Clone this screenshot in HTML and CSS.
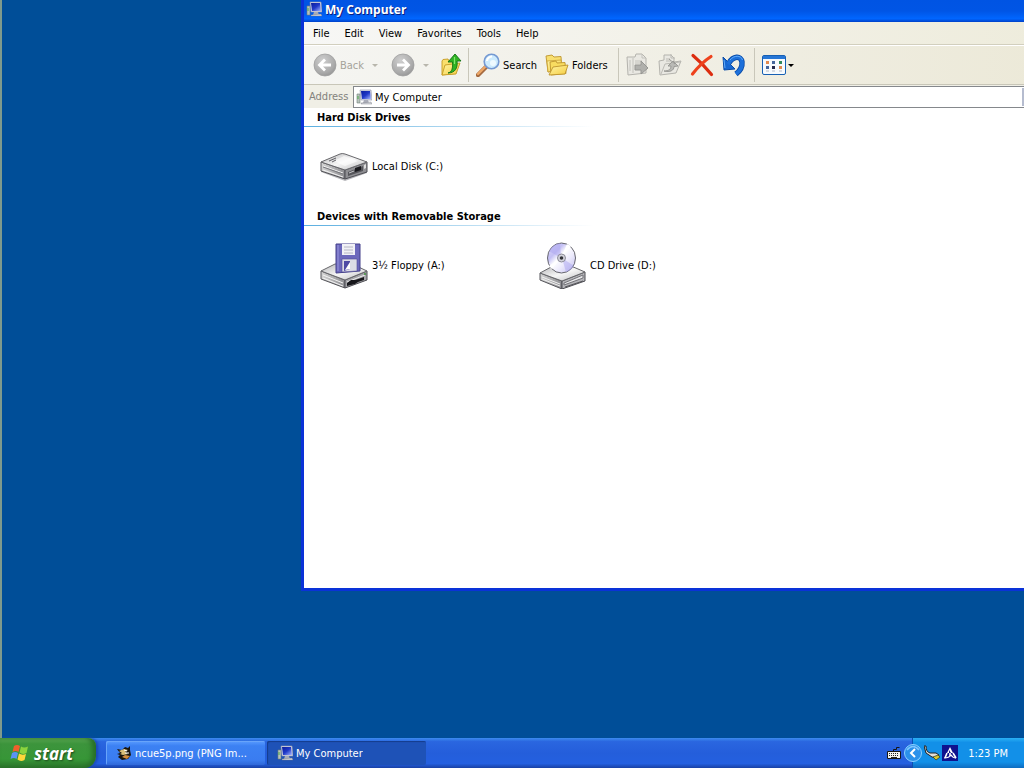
FILE: index.html
```html
<!DOCTYPE html>
<html lang="en">
<head>
  <meta charset="UTF-8">
  <meta name="viewport" content="width=device-width, initial-scale=1.0">
  <title>My Computer</title>
  <link rel="stylesheet" href="styles.css">
</head>
<body>
  <!-- shared icons and gradients -->
  <svg class="defs" width="0" height="0" aria-hidden="true">
    <defs>
      <linearGradient id="screen" x1="0" y1="0" x2="1" y2="1">
        <stop offset="0" stop-color="#0a1c9c"/><stop offset="0.5" stop-color="#2038c8"/><stop offset="1" stop-color="#a8b8ff"/>
      </linearGradient>
      <radialGradient id="gray" cx="0.4" cy="0.3" r="0.8">
        <stop offset="0" stop-color="#cfcfcf"/><stop offset="0.7" stop-color="#a9a9a9"/><stop offset="1" stop-color="#8e8e8e"/>
      </radialGradient>
      <linearGradient id="top" x1="0" y1="0" x2="1" y2="1">
        <stop offset="0" stop-color="#b4b4b6"/><stop offset="0.5" stop-color="#f6f6f6"/><stop offset="1" stop-color="#bcbcbe"/>
      </linearGradient>
      <linearGradient id="side" x1="0" y1="0" x2="1" y2="0">
        <stop offset="0" stop-color="#d4d4d4"/><stop offset="1" stop-color="#8c8c90"/>
      </linearGradient>
      <linearGradient id="folder" x1="0" y1="0" x2="1" y2="1">
        <stop offset="0" stop-color="#fff6a8"/><stop offset="1" stop-color="#f5cc3e"/>
      </linearGradient>
      <linearGradient id="disc" x1="0" y1="0" x2="1" y2="1">
        <stop offset="0" stop-color="#d8d4fa"/><stop offset="0.3" stop-color="#c4c0f4"/><stop offset="0.45" stop-color="#ffffff"/><stop offset="0.65" stop-color="#eceafc"/><stop offset="1" stop-color="#bcb8ee"/>
      </linearGradient>
      <symbol id="computer" viewBox="0 0 16 16">
        <path d="M1 5h3v9H1z" fill="#b9c4bd" stroke="#6f8078" stroke-width="0.6"/>
        <path d="M2 7v3" stroke="#4caa4c"/>
        <path d="M4 1l11 0 1 10-11 0z" fill="#d9dbe8" stroke="#8b90a8" stroke-width="0.6"/>
        <path d="M5 2h9l1 8H6z" fill="url(#screen)"/>
        <path d="M8 11h4l1 3H7z" fill="#a9acb8"/>
        <path d="M5 14l10-1 1 2H5z" fill="#d5d6dc" stroke="#70747f" stroke-width="0.4"/>
      </symbol>
    </defs>
  </svg>

  <main class="desktop">
    <section class="window">
      <header class="title-bar">
        <svg class="icon-16"><use href="#computer"/></svg>
        <h1>My Computer</h1>
      </header>

      <nav class="menu-bar">
        <button>File</button>
        <button>Edit</button>
        <button>View</button>
        <button>Favorites</button>
        <button>Tools</button>
        <button>Help</button>
      </nav>

      <div class="toolbar">
        <button class="tool" disabled>
          <svg class="icon-24" viewBox="0 0 24 24">
            <circle cx="12" cy="12" r="11" fill="url(#gray)" stroke="#a0a0a0" stroke-width="0.8"/>
            <path d="M18 12H7M12 6.500l-5.500 5.500 5.500 5.500" fill="none" stroke="#fff" stroke-width="2.800"/>
          </svg>
          Back
        </button>
        <button class="arrow" disabled aria-label="Back history"></button>
        <button class="tool" disabled aria-label="Forward">
          <svg class="icon-24" viewBox="0 0 24 24">
            <circle cx="12" cy="12" r="11" fill="url(#gray)" stroke="#a0a0a0" stroke-width="0.8"/>
            <path d="M6 12h11M12 6.500l5.500 5.500-5.500 5.500" fill="none" stroke="#fff" stroke-width="2.800"/>
          </svg>
        </button>
        <button class="arrow last" disabled aria-label="Forward history"></button>
        <button class="tool up" aria-label="Up">
          <svg class="icon-24" viewBox="0 0 24 24">
            <path d="M3 8l1-1.500 5-.5 1 2 6-.5v13L3 22z" fill="#f9df6c" stroke="#c59a20" stroke-width="0.9"/>
            <path d="M3 22l3-10 15-2-4 11z" fill="url(#folder)" stroke="#c59a20" stroke-width="0.9"/>
            <path d="M9 20c4-1 5-5 4.500-11H9l7-8 6 7h-4c1 7-2 12-9 12z" fill="#2fb324" stroke="#117012" stroke-width="0.9"/>
            <path d="M15.500 4v7" stroke="#83e66c" stroke-width="1.200"/>
          </svg>
        </button>
        <span class="separator"></span>
        <button class="tool">
          <svg class="icon-24" viewBox="0 0 24 24">
            <path d="M2 22l8-8" stroke="#a46a40" stroke-width="4.400" stroke-linecap="round"/>
            <path d="M2 21l8-8" stroke="#eea868" stroke-width="2.400" stroke-linecap="round"/>
            <circle cx="15.500" cy="8.500" r="7.300" fill="#cdebfd" stroke="#7599d2" stroke-width="1.600"/>
            <path d="M11 8a5 5 0 0 1 5-4.500" fill="none" stroke="#fff" stroke-width="2.200"/>
            <circle cx="17" cy="10" r="3" fill="#eefaff"/>
          </svg>
          Search
        </button>
        <button class="tool folders">
          <svg class="icon-24" viewBox="0 0 24 24">
            <path d="M1 3l6-1 2 2 7-.5 1 13L3 19z" fill="#f8df70" stroke="#bd942c" stroke-width="0.9"/>
            <path d="M3 19L2 8l14-1 1 8z" fill="url(#folder)" stroke="#c89f34" stroke-width="0.8"/>
            <path d="M5 9l6-1 1 2 8-.5 1 11L6 22z" fill="#f8dc60" stroke="#bd942c" stroke-width="0.9"/>
            <path d="M4 22l4-8 15-2-3 9z" fill="url(#folder)" stroke="#bd942c" stroke-width="0.9"/>
          </svg>
          Folders
        </button>
        <span class="separator"></span>
        <button class="tool" disabled aria-label="Move to">
          <svg class="icon-24" viewBox="0 0 24 24">
            <path d="M1 4h8l1-3h6l4 4v15L2 22z" fill="#e9e8e2" stroke="#b4b3ad"/>
            <path d="M16 1v4h4M4 7v11M7 5v15M9 8h7M9 10h5" fill="none" stroke="#c3c2bc"/>
            <path d="M9 12h6V8l7 7-7 6v-4H9z" fill="#b0b0ac" stroke="#969692"/>
          </svg>
        </button>
        <button class="tool" disabled aria-label="Copy to">
          <svg class="icon-24" viewBox="0 0 24 24">
            <path d="M1 8l5-1V2h7l3 3v4l7-1-5 12-16 2z" fill="#e9e8e2" stroke="#b4b3ad"/>
            <path d="M13 1v4h4M3 21l4-10 15-2M8 6h4M8 8h5" fill="none" stroke="#bcbbb5"/>
            <path d="M6 18c5 0 7-2 7-5h-3l5-5 5 5-4 .5c0 4-4 6-10 4.500zM11 6l6 5" fill="#babab6" stroke="#9a9a96"/>
          </svg>
        </button>
        <button class="tool" aria-label="Delete">
          <svg class="icon-24" viewBox="0 0 24 24">
            <path d="M3 2.500c6 5 12 11 18.500 19" fill="none" stroke="#dc2d10" stroke-width="3.200" stroke-linecap="round"/>
            <path d="M21 3.500C14 8 8 14 2.500 21" fill="none" stroke="#ee421c" stroke-width="3.200" stroke-linecap="round"/>
          </svg>
        </button>
        <button class="tool" aria-label="Undo">
          <svg class="icon-24" viewBox="0 0 24 24">
            <path d="M7 10C11 3 19 2 20 9c.5 5-2 9-6 12" fill="none" stroke="#0a4ba6" stroke-width="5.400"/>
            <path d="M1 4l1 13 11-1z" fill="#1768d2" stroke="#0a4ba6"/>
            <path d="M6 11C11 3 19 2 20 9c.5 5-2 9-6 12" fill="none" stroke="#1d70da" stroke-width="3.800"/>
            <path d="M8 7c4-5 11-5 12.500 0M2 7l1 8" fill="none" stroke="#62aefc"/>
          </svg>
        </button>
        <span class="separator"></span>
        <button class="tool views" aria-label="Views">
          <svg class="icon-24" viewBox="0 0 24 24">
            <rect x="0.500" y="2.500" width="23" height="19" rx="1.500" fill="#f7fafd" stroke="#1760b4"/>
            <path d="M1 3h22v3H1z" fill="#2777d6"/>
            <path d="M4 8h3v3H4zM17 13h3v3h-3z" fill="#e28b50"/>
            <path d="M10 8h3v3h-3zM4 13h3v3H4z" fill="#45679e"/>
            <path d="M17 8h3v3h-3z" fill="#32885b"/>
            <path d="M10 13h3v3h-3z" fill="#25294a"/>
            <path d="M4 18h3M10 18h3M17 18h3" stroke="#b4bac6"/>
          </svg>
          <span class="caret"></span>
        </button>
      </div>

      <div class="address-bar">
        <label for="address">Address</label>
        <div class="address-box">
          <svg class="icon-16"><use href="#computer"/></svg>
          <input type="text" id="address" value="My Computer">
          <button class="drop" aria-label="Show addresses"></button>
        </div>
      </div>

      <div class="content">
        <section class="group">
          <h2>Hard Disk Drives</h2>
          <div class="drives">
            <a class="drive" href="#c">
              <svg class="icon-48" viewBox="0 0 48 48">
                <path d="M1 30l24 9 22-8-1-3-44 0z" fill="#b8b8bc"/>
                <path d="M1 20l24 8v9L1 29z" fill="url(#side)" stroke="#55555a"/>
                <path d="M25 28l22-8v10l-22 7z" fill="#8f8f93" stroke="#4e4e54"/>
                <path d="M1 20l19-8q2-1 5 0l22 8-22 8z" fill="url(#top)" stroke="#68686c"/>
                <path d="M14 19l10-5 14 5-13 5z" fill="#fff" opacity="0.6"/>
                <path d="M9 19l7-3M12 20l4-2" stroke="#606066"/>
                <path d="M3 24l20 7M3 28l20 7" stroke="#f3f3f3"/>
                <path d="M3 25l20 7" stroke="#77777c"/>
                <path d="M28 30l15-6v5l-15 5z" fill="#55555a"/>
                <path d="M35 26l6-2v4l-6 2z" fill="#19191d"/>
                <path d="M29 31l5-2" stroke="#c9c9cd"/>
                <path d="M44 23l2-1v4l-2 1z" fill="#ddd"/>
              </svg>
              Local Disk (C:)
            </a>
          </div>
        </section>

        <section class="group">
          <h2>Devices with Removable Storage</h2>
          <div class="drives">
            <a class="drive" href="#a">
              <svg class="icon-48" viewBox="0 0 48 48">
                <path d="M1 30l24 9v8L1 38z" fill="url(#side)" stroke="#55555a"/>
                <path d="M25 39l22-9v9l-22 8z" fill="#a5a5a9" stroke="#4e4e54"/>
                <path d="M1 30l14-7 17 0 15 7-22 9z" fill="url(#top)" stroke="#68686c"/>
                <path d="M3 34l20 8M3 37l20 8" stroke="#f4f4f4"/>
                <path d="M27 41l18-7" stroke="#eee"/>
                <path d="M27 42l4-3 4 0 9-3v3l-6 2-3 2-8 2z" fill="#18181c"/>
                <path d="M44 32h2v2h-2z" fill="#5b9a59"/>
                <path d="M16 3h24v27l-24 2z" fill="#6c68bc" stroke="#45418a"/>
                <path d="M18 4v26" stroke="#9a97e0"/>
                <path d="M22 3h13v11H22z" fill="#f1f1f6"/>
                <path d="M24 6h9M24 9h9M24 12h9" stroke="#b6b6c4"/>
                <path d="M22 18h15v12l-15 1z" fill="#dcdce6" stroke="#504c94" stroke-width="0.6"/>
                <path d="M24 20h6v8l-6 2z" fill="#4e4aa4"/>
                <path d="M25 29l5-8v7z" fill="#fff"/>
              </svg>
              3½ Floppy (A:)
            </a>
            <a class="drive" href="#d">
              <svg class="icon-48" viewBox="0 0 48 48">
                <path d="M2 32l22 8v8L2 39z" fill="url(#side)" stroke="#55555a"/>
                <path d="M24 40l23-9v9l-23 8z" fill="#b4b4b8" stroke="#4e4e54"/>
                <path d="M2 32l13-7 18 0 14 6-23 9z" fill="url(#top)" stroke="#68686c"/>
                <path d="M4 36l18 7M4 38l18 7" stroke="#f2f2f2"/>
                <path d="M26 42l19-8v3l-19 7z" fill="#e8e8ea" stroke="#737378"/>
                <path d="M27 46l18-6" stroke="#56565b"/>
                <ellipse cx="23.500" cy="17" rx="14" ry="15" fill="url(#disc)" stroke="#65656d"/>
                <path d="M23 17L11 10q4-7 11-8zM24 17l12 8q-3 5-8 6z" fill="#aba6ef" opacity="0.5"/>
                <path d="M23 17L29 3l4 2zM23 17l-9 11-3-3z" fill="#fff"/>
                <circle cx="23.500" cy="17" r="4" fill="#d3d3dc" stroke="#8c8c98"/>
                <circle cx="23.500" cy="17" r="1.800" fill="#34343a"/>
              </svg>
              CD Drive (D:)
            </a>
          </div>
        </section>
      </div>
    </section>
  </main>

  <footer class="taskbar">
    <button class="start">
      <svg class="flag" viewBox="0 0 20 20">
        <path d="M4 3q3-2 6 0L8.500 9Q5.500 7 2.500 9z" fill="#f0602c"/>
        <path d="M11 3.500q3 2 7 0L16.500 10q-4 2-7-.5z" fill="#8bd33e"/>
        <path d="M2 10q3-2 6 0l-1.500 6Q4 14 .5 16z" fill="#5b93f4"/>
        <path d="M9 10.500q3 2 7 .5l-1.500 6q-4 2-7-.5z" fill="#ffd63a"/>
      </svg>
      start
    </button>
    <div class="tasks">
      <button class="task">
        <svg class="icon-16" viewBox="0 0 16 16">
          <path d="M1 4l5 1 3-3 3 1 2-2v4l1 5-3 4-6 1-4-3 2-2-3-1 3-1z" fill="#19150f"/>
          <path d="M3 6l5-2 4 1-3 2 3 2-5 1-3-1 2-1z" fill="#d9bf79"/>
          <path d="M6 12l3-2 5 1-3 3z" fill="#d18c3c"/>
          <path d="M8 5l3 1M9 8h4" stroke="#fff"/>
        </svg>
        <span>ncue5p.png (PNG Im...</span>
      </button>
      <button class="task active">
        <svg class="icon-16"><use href="#computer"/></svg>
        <span>My Computer</span>
      </button>
    </div>
    <button class="tray-icon" aria-label="Keyboard">
      <svg class="icon-16" viewBox="0 0 16 16">
        <path d="M1.500 6.500h13v7h-13z" fill="#f2f2ed" stroke="#161616"/>
        <path d="M3 8.500h10M3 10.500h10" stroke="#222" stroke-dasharray="1 1"/>
        <path d="M5 12.500h6" stroke="#222"/>
        <path d="M7.500 6V4.500h3V2.500h3" fill="none" stroke="#161616"/>
      </svg>
    </button>
    <div class="tray">
      <button class="expand" aria-label="Show hidden icons">
        <svg class="icon-18" viewBox="0 0 18 18">
          <circle cx="9" cy="9" r="8.500" fill="#2b91ea" stroke="#8dd1ff"/>
          <path d="M3 6q6-7 12 0" fill="none" stroke="#80c6ff" stroke-width="1.500"/>
          <path d="M11 5L7 9l4 4" fill="none" stroke="#fff" stroke-width="2"/>
        </svg>
      </button>
      <button class="tray-icon" aria-label="Safely remove hardware">
        <svg class="icon-16" viewBox="0 0 16 16">
          <path d="M0 1h2q0 6 4 7l6 0 3 2-2 3-5-1-6-4z" fill="#e0e0dc" stroke="#222"/>
          <path d="M9 12l5-2 2 2-4 3z" fill="#d6c72e" stroke="#353510" stroke-width="0.7"/>
        </svg>
      </button>
      <button class="tray-icon" aria-label="Status">
        <svg class="icon-16" viewBox="0 0 16 16">
          <path d="M0 0h16v16H0z" fill="#10128e"/>
          <path d="M8 2l3 6H5z" fill="#fff"/>
          <path d="M5 8l-2 5M11 8l3 5M8 7v4" stroke="#fff" stroke-width="1.600"/>
          <path d="M2 13q5 0 7-3 2 3 5 3" fill="none" stroke="#fff" stroke-width="1.200"/>
          <path d="M7 5l2 3H7z" fill="#10128e"/>
        </svg>
      </button>
      <time>1:23 PM</time>
    </div>
  </footer>
</body>
</html>
```
FILE: styles.css
```css
* {
  box-sizing: border-box;
}
body {
  margin: 0;
  height: 100vh;
  display: flex;
  flex-direction: column;
  overflow: hidden;
  background: #004e98;
  font-family: Tahoma, 'DejaVu Sans Condensed', 'DejaVu Sans', sans-serif;
  font-size: 11px;
  color: #000;
}
button, input {
  font: inherit;
  color: inherit;
  background: none;
  border: none;
  margin: 0;
  padding: 0;
}
svg {
  flex: none;
  display: block;
}
.defs {
  position: absolute;
}
.icon-16 {
  width: 16px;
  height: 16px;
}
.icon-18 {
  width: 18px;
  height: 18px;
}
.icon-24 {
  width: 24px;
  height: 24px;
}
.icon-48 {
  width: 48px;
  height: 48px;
}

/* desktop */
.desktop {
  flex: 1;
  position: relative;
  overflow: hidden;
  border-left: 2px solid #7f9a8c;
}
.window {
  position: absolute;
  top: 0;
  left: 299px;
  right: -20px;
  border: 3px solid #0a32d8;
  border-top: none;
  background: #fff;
}
.title-bar {
  display: flex;
  align-items: center;
  gap: 3px;
  height: 22px;
  padding: 0 2px 4px;
  background: linear-gradient(#0054e3, #0055e5 50%, #0066ff 85%, #0040c8);
  color: #fff;
}
.title-bar h1 {
  margin: 0;
  font-family: 'Trebuchet MS', 'Open Sans', sans-serif;
  font-size: 12px;
  font-weight: bold;
  text-shadow: 1px 1px #0a1f80;
}

.menu-bar {
  display: flex;
  height: 23px;
  padding: 0 2px;
  background: linear-gradient(90deg, #f7f7f5, #eeecdc);
  border-bottom: 1px solid #d2cfbe;
}
.menu-bar button {
  padding: 0 8px 0 7px;
}

.toolbar {
  display: flex;
  align-items: center;
  height: 40px;
  padding: 0 9px;
  background: linear-gradient(90deg, #f5f5f2, #ece9d8);
  border-top: 1px solid #fff;
  border-bottom: 1px solid #c8c6b8;
}
.tool {
  display: flex;
  align-items: center;
  gap: 3px;
  margin-right: 8px;
}
.tool:disabled {
  color: #a5a39a;
}
.up {
  margin-right: 5px;
}
.folders {
  margin-right: 10px;
}
.views {
  gap: 2px;
}
.arrow {
  margin-right: 13px;
  border: 3px solid transparent;
  border-top-color: #b8b6ac;
  border-bottom: none;
}
.arrow.last {
  margin-right: 10px;
}
.separator {
  width: 1px;
  height: 34px;
  margin-right: 7px;
  background: #c9c7ba;
}
.caret {
  border: 3px solid transparent;
  border-top-color: #000;
  border-bottom: none;
}

.address-bar {
  display: flex;
  align-items: center;
  height: 23px;
  background: #f0efe6;
}
.address-bar label {
  width: 49px;
  padding-left: 5px;
  color: #83827c;
}
.address-box {
  flex: 1;
  display: flex;
  align-items: center;
  gap: 3px;
  height: 22px;
  padding-left: 2px;
  border: 1px solid #85888c;
  background: #fff;
}
.address-box input {
  flex: 1;
  padding-top: 2px;
  outline: none;
}
.drop {
  width: 18px;
  height: 18px;
  border-left: 2px solid #b5bccf;
  background: #d2dcfa;
}

.content {
  min-height: 480px;
}
.group h2 {
  margin: 0;
  padding: 2px 0 0 13px;
  font-size: 11px;
  font-weight: bold;
  line-height: 16px;
  border-bottom: 1px solid;
  border-image: linear-gradient(90deg, #5aaee0, #fff 290px) 1;
}
.drives {
  display: flex;
  padding: 15px 16px 17px;
}
.drive {
  display: flex;
  align-items: center;
  gap: 4px;
  width: 218px;
  color: #000;
  text-decoration: none;
}

/* taskbar */
.taskbar {
  display: flex;
  height: 30px;
  background: linear-gradient(#3c8cf0, #2a66e0 12%, #245edb 50%, #2460e0 85%, #1941a5);
  color: #fff;
}
.start {
  display: flex;
  align-items: center;
  gap: 4px;
  width: 96px;
  padding-left: 10px;
  border-radius: 0 8px 12px 0;
  background: linear-gradient(#5eac56, #3c943c 20%, #379637 70%, #2a742a);
  box-shadow: inset -4px 0 5px #286e28, 2px 0 3px #1a48b4;
  font-family: 'Trebuchet MS', 'Open Sans', sans-serif;
  font-size: 17px;
  font-style: italic;
  font-weight: bold;
  text-shadow: 1px 1px 2px #1c481c;
}
.flag {
  width: 20px;
  height: 20px;
}
.tasks {
  flex: 1;
  display: flex;
  gap: 2px;
  padding: 3px 0 3px 10px;
}
.task {
  display: flex;
  align-items: center;
  gap: 3px;
  width: 159px;
  padding: 0 10px;
  border-radius: 2px;
  background: linear-gradient(#5a9cff, #3c81f3 20%, #3a7cf0 80%, #2f68d8);
  box-shadow: inset 1px 1px #68a4fa;
}
.task span {
  overflow: hidden;
  white-space: nowrap;
}
.task.active {
  background: #1e52b7;
  box-shadow: inset 1px 1px 1px #143c8c;
}
.tray-icon {
  display: flex;
  align-items: center;
}
.taskbar > .tray-icon {
  margin-right: 10px;
}
.tray {
  display: flex;
  align-items: center;
  gap: 2px;
  padding-right: 16px;
  border-left: 1px solid #0d4fb0;
  background: linear-gradient(#2ab0f4, #1290e8 15%, #1290e8 80%, #0e6cc0);
}
.expand {
  margin-left: -9px;
}
.tray time {
  margin-left: 8px;
}
```
